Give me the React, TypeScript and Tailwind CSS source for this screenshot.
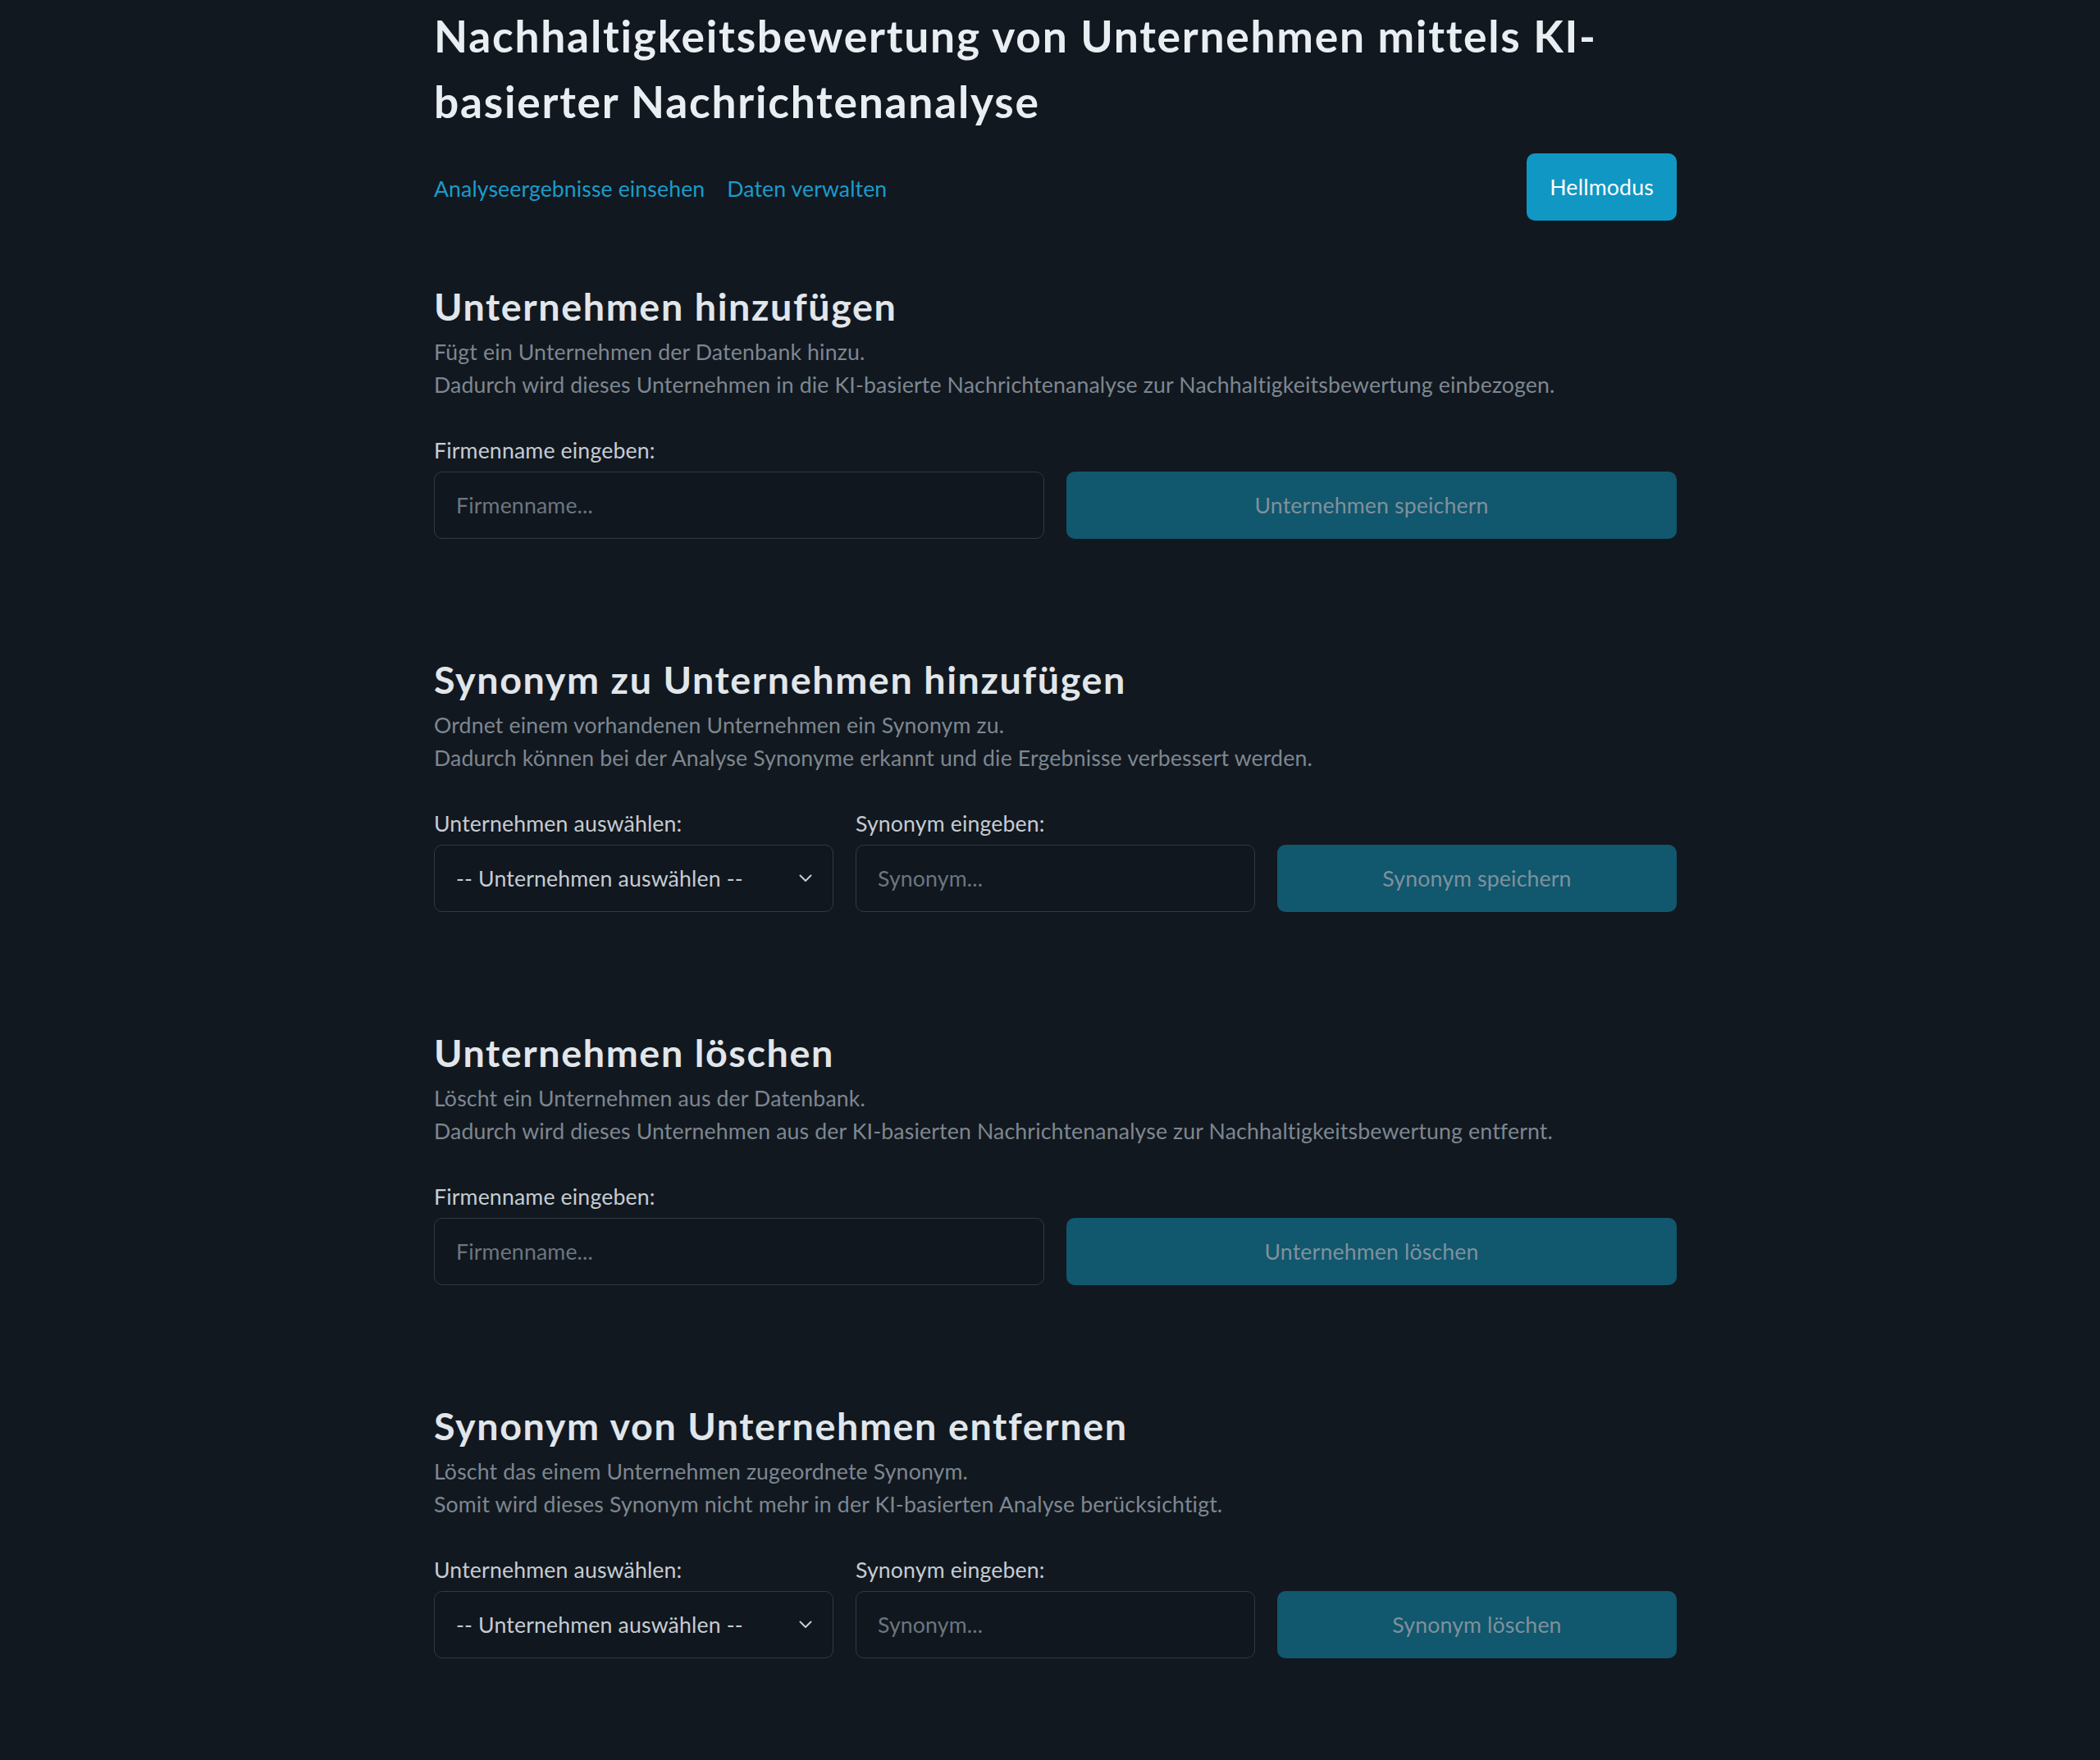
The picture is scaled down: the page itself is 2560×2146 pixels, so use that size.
import React from "react";

function Chevron() {
  return (
    <svg width="16" height="10" viewBox="0 0 16 10" className="absolute right-[26px] top-1/2 -translate-y-1/2 pointer-events-none">
      <polyline points="1.5,1.5 8,8 14.5,1.5" fill="none" stroke="#c5ccd3" strokeWidth="2" strokeLinecap="round" strokeLinejoin="round" />
    </svg>
  );
}

function TextInput({ placeholder }: { placeholder: string }) {
  return (
    <input
      type="text"
      placeholder={placeholder}
      className="w-full h-[82px] px-[26px] rounded-[10px] border border-[#2f3a44] bg-[#11171e] text-[#c5ccd3] tracking-[0.15px] placeholder:text-[#6b7680] outline-none"
    />
  );
}

function SaveButton({ label }: { label: string }) {
  return (
    <button className="w-full h-[82px] rounded-[10px] bg-[#11576e] text-[#7f919c] tracking-[0.15px]">{label}</button>
  );
}

function Label({ children }: { children: React.ReactNode }) {
  return <label className="block mb-[6px] text-[#c5ccd3] tracking-[0.15px]">{children}</label>;
}

function SelectBox() {
  return (
    <div className="relative">
      <select className="appearance-none w-full h-[82px] pl-[26px] pr-[60px] rounded-[10px] border border-[#2f3a44] bg-[#11171e] text-[#c5ccd3] tracking-[0.15px] outline-none">
        <option>-- Unternehmen auswählen --</option>
      </select>
      <Chevron />
    </div>
  );
}

function Section({
  title,
  lines,
  children,
  first,
}: {
  title: string;
  lines: string[];
  children: React.ReactNode;
  first?: boolean;
}) {
  return (
    <section className={first ? "mt-[76px]" : "mt-[143px]"}>
      <h2 className="text-[46.67px] leading-[56px] font-bold tracking-[1.6px] text-[#e1e6eb]">{title}</h2>
      <p className="mt-[8px] text-[#7d8791] tracking-[0.15px]">
        {lines[0]}
        <br />
        {lines[1]}
      </p>
      <div className="mt-[40px]">{children}</div>
    </section>
  );
}

export default function App() {
  return (
    <div className="min-h-[2146px] bg-[#12181f] font-['Lato',sans-serif] text-[26.67px] leading-[40px]">
      <div className="ml-[529px] w-[1515px] pt-[3px] pb-[124px]">
        <h1 className="text-[53.33px] leading-[80px] font-bold tracking-[1.75px] text-[#e9eef2]">
          Nachhaltigkeitsbewertung von Unternehmen mittels KI-
          <br />
          basierter Nachrichtenanalyse
        </h1>
        <nav className="mt-[24px] flex items-center justify-between h-[82px]">
          <div className="flex gap-[27px] pt-[3px] tracking-[0.1px]">
            <a className="text-[#1a9bcb]" href="#">Analyseergebnisse einsehen</a>
            <a className="text-[#1a9bcb]" href="#">Daten verwalten</a>
          </div>
          <button className="h-[82px] px-[28px] rounded-[10px] bg-[#1197c3] text-white tracking-[0.2px]">Hellmodus</button>
        </nav>

        <Section
          first
          title="Unternehmen hinzufügen"
          lines={[
            "Fügt ein Unternehmen der Datenbank hinzu.",
            "Dadurch wird dieses Unternehmen in die KI-basierte Nachrichtenanalyse zur Nachhaltigkeitsbewertung einbezogen.",
          ]}
        >
          <Label>Firmenname eingeben:</Label>
          <div className="grid grid-cols-2 gap-[27px]">
            <TextInput placeholder="Firmenname..." />
            <SaveButton label="Unternehmen speichern" />
          </div>
        </Section>

        <Section
          title="Synonym zu Unternehmen hinzufügen"
          lines={[
            "Ordnet einem vorhandenen Unternehmen ein Synonym zu.",
            "Dadurch können bei der Analyse Synonyme erkannt und die Ergebnisse verbessert werden.",
          ]}
        >
          <div className="grid grid-cols-3 gap-[27px] items-end">
            <div>
              <Label>Unternehmen auswählen:</Label>
              <SelectBox />
            </div>
            <div>
              <Label>Synonym eingeben:</Label>
              <TextInput placeholder="Synonym..." />
            </div>
            <SaveButton label="Synonym speichern" />
          </div>
        </Section>

        <Section
          title="Unternehmen löschen"
          lines={[
            "Löscht ein Unternehmen aus der Datenbank.",
            "Dadurch wird dieses Unternehmen aus der KI-basierten Nachrichtenanalyse zur Nachhaltigkeitsbewertung entfernt.",
          ]}
        >
          <Label>Firmenname eingeben:</Label>
          <div className="grid grid-cols-2 gap-[27px]">
            <TextInput placeholder="Firmenname..." />
            <SaveButton label="Unternehmen löschen" />
          </div>
        </Section>

        <Section
          title="Synonym von Unternehmen entfernen"
          lines={[
            "Löscht das einem Unternehmen zugeordnete Synonym.",
            "Somit wird dieses Synonym nicht mehr in der KI-basierten Analyse berücksichtigt.",
          ]}
        >
          <div className="grid grid-cols-3 gap-[27px] items-end">
            <div>
              <Label>Unternehmen auswählen:</Label>
              <SelectBox />
            </div>
            <div>
              <Label>Synonym eingeben:</Label>
              <TextInput placeholder="Synonym..." />
            </div>
            <SaveButton label="Synonym löschen" />
          </div>
        </Section>
      </div>
    </div>
  );
}
